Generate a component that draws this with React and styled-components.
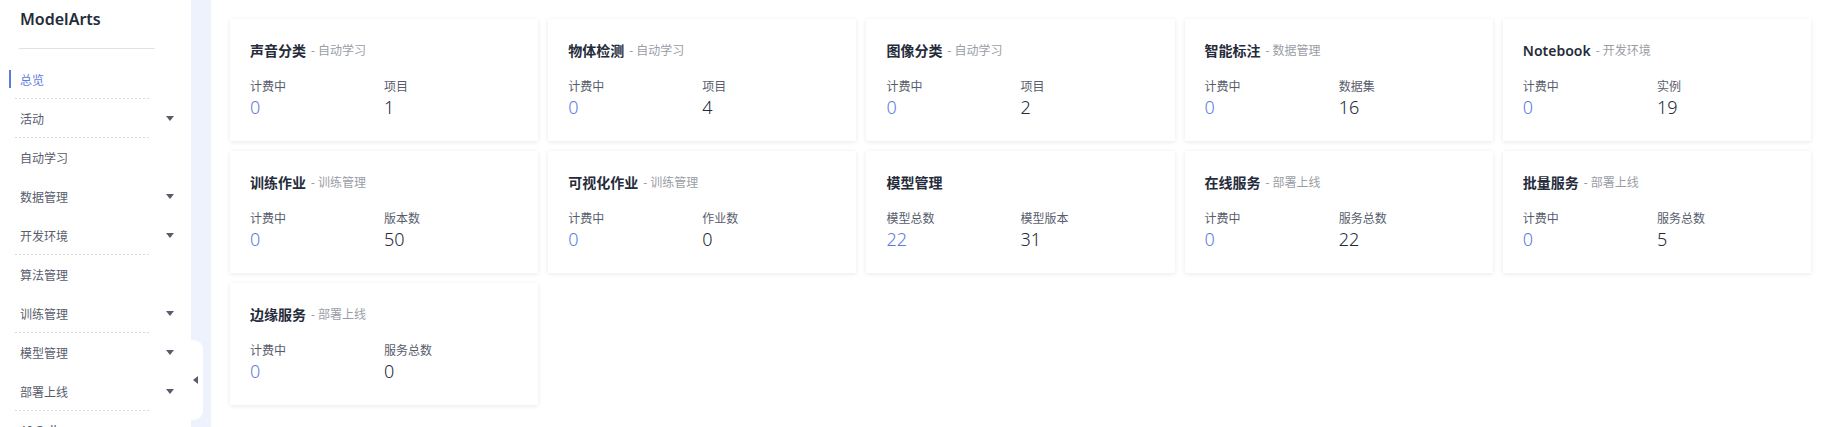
import styled, { createGlobalStyle } from "styled-components";

const GlobalStyle = createGlobalStyle`
  html, body {
    margin: 0;
    padding: 0;
    height: 100%;
    overflow: hidden;
    background: #ffffff;
  }
  body {
    font-family: "Noto Sans", "Noto Sans CJK SC", sans-serif;
    color: #252b3a;
  }
  #root {
    height: 100%;
  }
`;

const menuItems = [
  { label: "总览", active: true, divider: true },
  { label: "活动", arrow: true, divider: true },
  { label: "自动学习" },
  { label: "数据管理", arrow: true },
  { label: "开发环境", arrow: true, divider: true },
  { label: "算法管理" },
  { label: "训练管理", arrow: true, divider: true },
  { label: "模型管理", arrow: true },
  { label: "部署上线", arrow: true, divider: true },
  { label: "AI Gallery", link: true },
];

const cards = [
  { title: "声音分类", sub: "自动学习", a: ["计费中", "0"], b: ["项目", "1"] },
  { title: "物体检测", sub: "自动学习", a: ["计费中", "0"], b: ["项目", "4"] },
  { title: "图像分类", sub: "自动学习", a: ["计费中", "0"], b: ["项目", "2"] },
  { title: "智能标注", sub: "数据管理", a: ["计费中", "0"], b: ["数据集", "16"] },
  { title: "Notebook", sub: "开发环境", a: ["计费中", "0"], b: ["实例", "19"] },
  { title: "训练作业", sub: "训练管理", a: ["计费中", "0"], b: ["版本数", "50"] },
  { title: "可视化作业", sub: "训练管理", a: ["计费中", "0"], b: ["作业数", "0"] },
  { title: "模型管理", a: ["模型总数", "22"], b: ["模型版本", "31"] },
  { title: "在线服务", sub: "部署上线", a: ["计费中", "0"], b: ["服务总数", "22"] },
  { title: "批量服务", sub: "部署上线", a: ["计费中", "0"], b: ["服务总数", "5"] },
  { title: "边缘服务", sub: "部署上线", a: ["计费中", "0"], b: ["服务总数", "0"] },
];

const Layout = styled.div`
  display: flex;
  height: 100vh;
  overflow: hidden;
`;

const SideWrap = styled.aside`
  position: relative;
  display: flex;
  width: 211px;
  flex-shrink: 0;
  background: #eef2fd;
`;

const Nav = styled.nav`
  width: 191px;
  background: #ffffff;
  overflow: hidden;
`;

const Brand = styled.div`
  height: 38px;
  padding-left: 20px;
  display: flex;
  align-items: center;
  font-size: 16px;
  font-weight: 600;
  color: #252b3a;
`;

const BrandLine = styled.div`
  height: 1px;
  margin: 10px 36px 0 19px;
  background: #dfe1e6;
`;

const MenuList = styled.ul`
  list-style: none;
  margin: 11px 0 0;
  padding: 0;
`;

const MenuItem = styled.li`
  position: relative;
  height: 39px;
  display: flex;
  align-items: center;
  justify-content: space-between;
  padding: 0 15px 0 20px;
  font-size: 12px;
  color: ${(p) => (p.$active ? "#5e7ce0" : "#575d6c")};

  &::before {
    content: "";
    display: ${(p) => (p.$active ? "block" : "none")};
    position: absolute;
    left: 9px;
    top: 10px;
    width: 2px;
    height: 18px;
    background: #5e7ce0;
  }

  &::after {
    content: "";
    display: ${(p) => (p.$divider ? "block" : "none")};
    position: absolute;
    left: 15px;
    bottom: 0;
    width: 136px;
    height: 1px;
    background-image: repeating-linear-gradient(
      to right,
      #d7dae2 0 2px,
      transparent 2px 4px
    );
  }
`;

const Caret = styled.span`
  width: 0;
  height: 0;
  border-left: 4px solid transparent;
  border-right: 4px solid transparent;
  border-top: 5px solid #575d6c;
  margin-right: 2px;
`;

const CollapseTab = styled.div`
  position: absolute;
  left: 191px;
  top: 340px;
  width: 12px;
  height: 80px;
  background: #ffffff;
  border-radius: 0 9px 9px 0;
  display: flex;
  align-items: center;
  padding-left: 2px;
  box-sizing: border-box;
`;

const LeftCaret = styled.span`
  width: 0;
  height: 0;
  border-top: 4px solid transparent;
  border-bottom: 4px solid transparent;
  border-right: 5px solid #575d6c;
`;

const Main = styled.main`
  flex: 1;
  padding: 19px 10px 0 19px;
  display: grid;
  grid-template-columns: repeat(5, 1fr);
  grid-auto-rows: 122px;
  gap: 10px;
  align-content: start;
`;

const Card = styled.div`
  background: #ffffff;
  box-shadow: 0 1px 4px rgba(37, 43, 58, 0.1);
  padding: 21px 20px 0;
  box-sizing: border-box;
`;

const CardTitle = styled.div`
  height: 20px;
  display: flex;
  align-items: center;
  font-size: 14px;
  font-weight: 600;
  color: #252b3a;
`;

const Sub = styled.span`
  margin-left: 5px;
  font-size: 12px;
  font-weight: 400;
  color: #9a9da6;
`;

const Stats = styled.div`
  display: grid;
  grid-template-columns: 1fr 1fr;
  margin-top: 18px;
`;

const Stat = styled.div`
  display: flex;
  flex-direction: column;
`;

const Label = styled.div`
  font-size: 12px;
  line-height: 18px;
  color: #575d6c;
`;

const Value = styled.div`
  font-size: 18px;
  line-height: 22px;
  font-weight: 300;
  color: ${(p) => (p.$accent ? "#5e7ce0" : "#252b3a")};
`;

const LinkIcon = () => (
  <svg width="10" height="10" viewBox="0 0 10 10" fill="none" stroke="#575d6c" strokeWidth="1">
    <path d="M4 1.5H1.5v7h7V6" />
    <path d="M6 1.5h2.5V4M8.5 1.5L4.5 5.5" />
  </svg>
);

const App = () => {
  return (
    <Layout>
      <GlobalStyle />
      <SideWrap>
        <Nav>
          <Brand>ModelArts</Brand>
          <BrandLine />
          <MenuList>
            {menuItems.map((item) => (
              <MenuItem key={item.label} $active={item.active} $divider={item.divider}>
                <span>{item.label}</span>
                {item.arrow && <Caret />}
                {item.link && <LinkIcon />}
              </MenuItem>
            ))}
          </MenuList>
        </Nav>
        <CollapseTab>
          <LeftCaret />
        </CollapseTab>
      </SideWrap>
      <Main>
        {cards.map((c) => (
          <Card key={c.title}>
            <CardTitle>
              {c.title}
              {c.sub && <Sub>- {c.sub}</Sub>}
            </CardTitle>
            <Stats>
              <Stat>
                <Label>{c.a[0]}</Label>
                <Value $accent>{c.a[1]}</Value>
              </Stat>
              <Stat>
                <Label>{c.b[0]}</Label>
                <Value>{c.b[1]}</Value>
              </Stat>
            </Stats>
          </Card>
        ))}
      </Main>
    </Layout>
  );
};

export default App;
